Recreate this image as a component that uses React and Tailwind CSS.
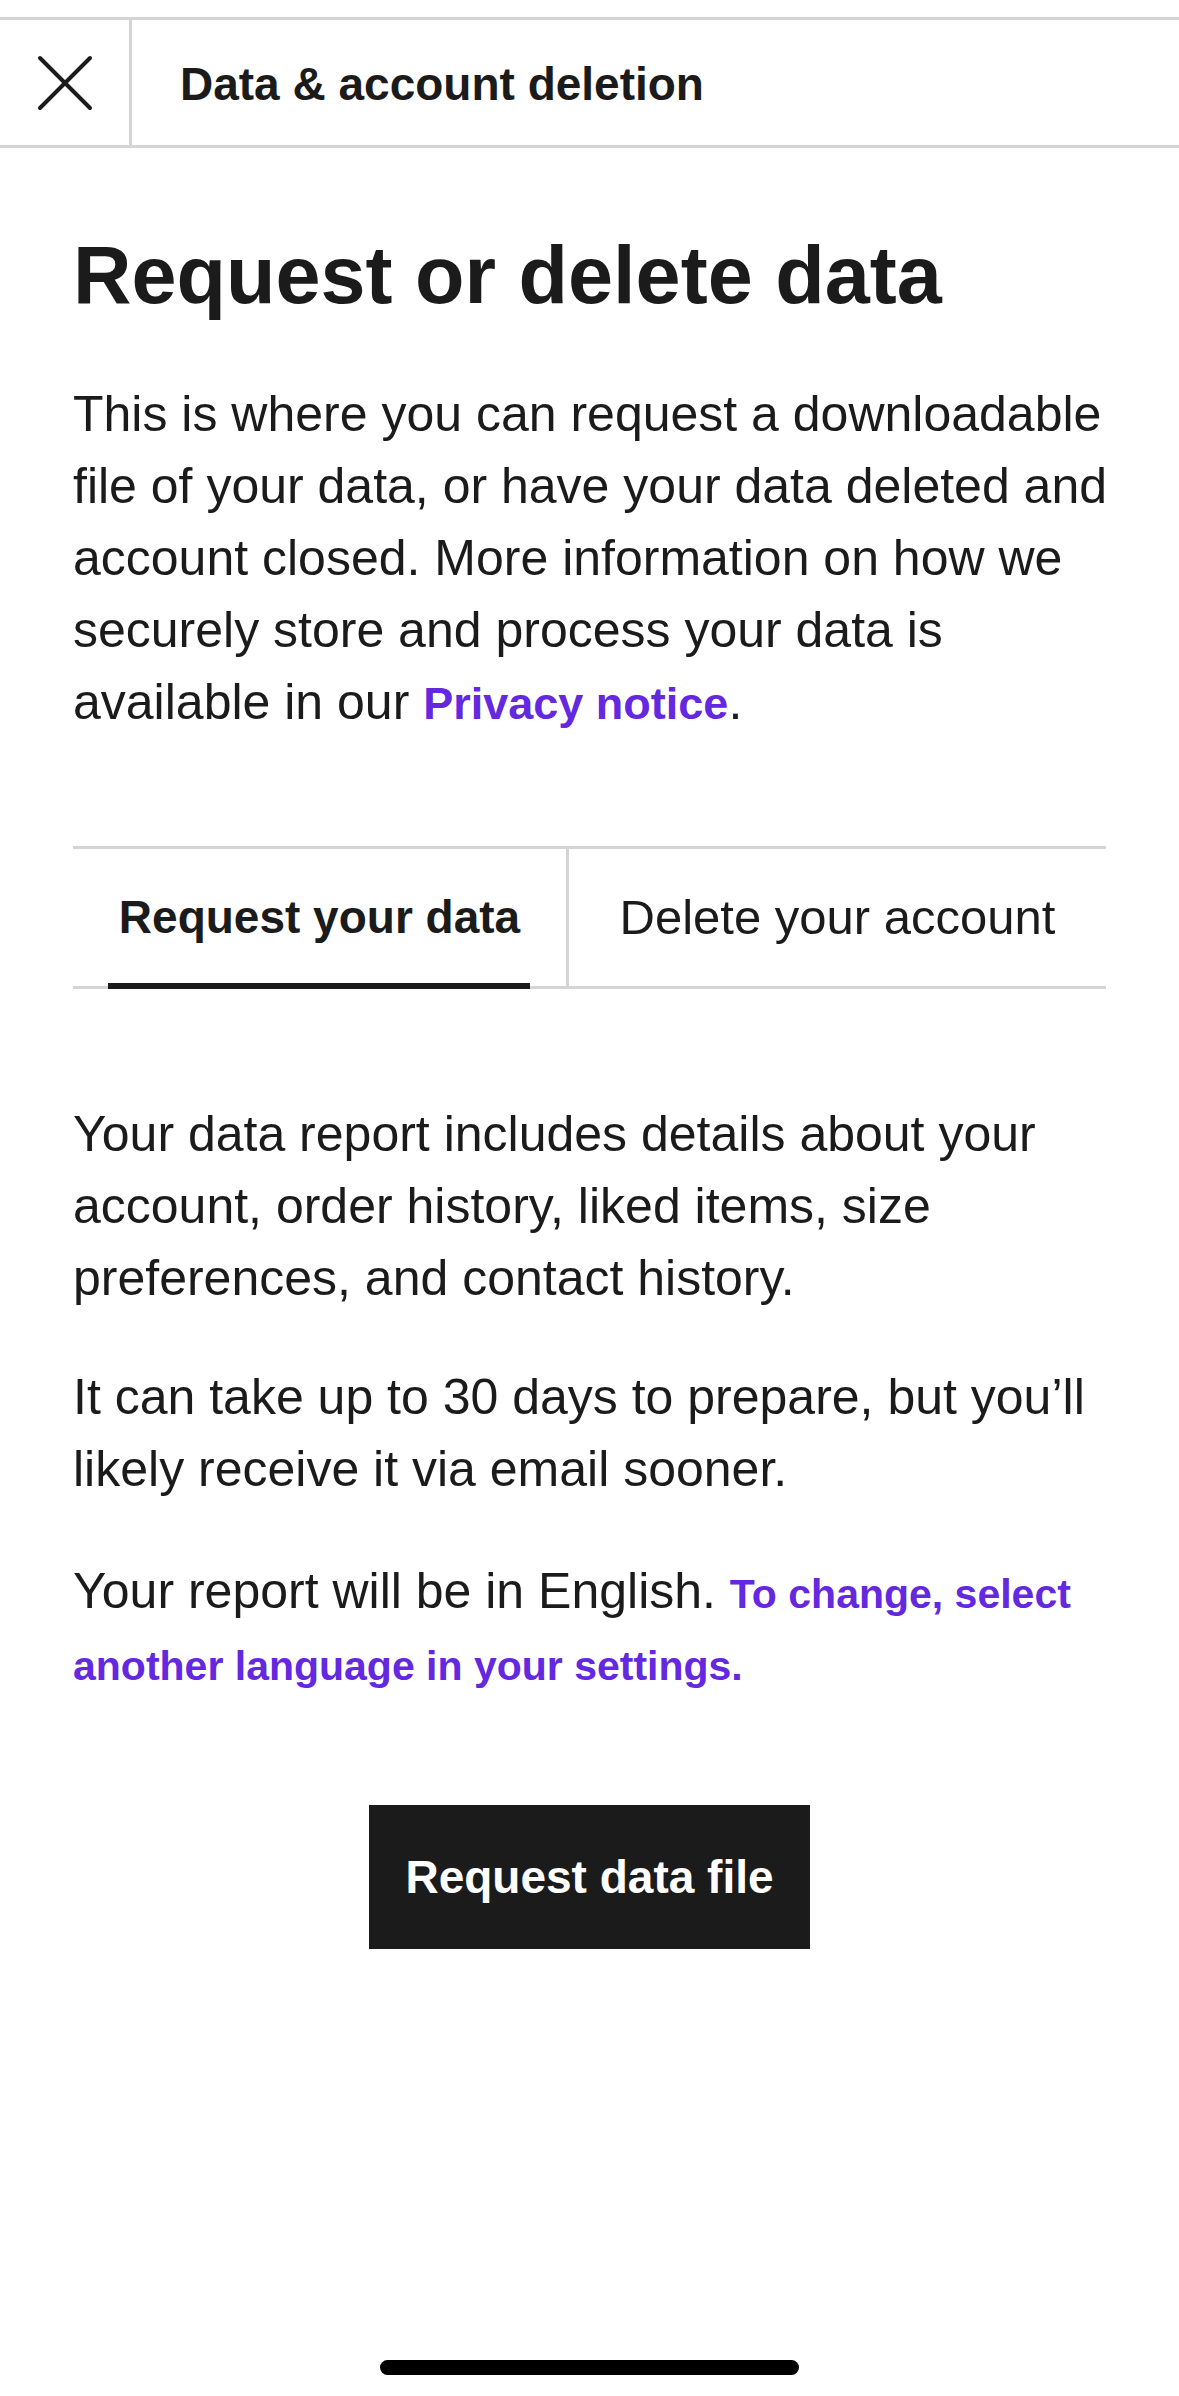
import React, { useState } from 'react';

const tabs = ['Request your data', 'Delete your account'];

export default function App() {
  const [active, setActive] = useState(0);

  return (
    <div className="min-h-[2396px] bg-white flex flex-col font-['Liberation_Sans',Arial,sans-serif] text-[#1b1b1b]">
      <div className="h-[17px] shrink-0" />

      {/* Header */}
      <header className="flex h-[131px] shrink-0 border-y-[3px] border-[#d5d5d5]">
        <button className="w-[132px] shrink-0 border-r-[3px] border-[#d5d5d5] flex items-center justify-center">
          <svg width="56" height="56" viewBox="0 0 56 56" fill="none">
            <path d="M3 3L53 53M53 3L3 53" stroke="#1b1b1b" strokeWidth="4" strokeLinecap="round" />
          </svg>
        </button>
        <h1 className="pl-[48px] pt-[2px] flex items-center text-[46px] font-bold leading-none">
          Data &amp; account deletion
        </h1>
      </header>

      <main className="pl-[73px] pr-[64px]">
        <h2 className="mt-[79px] text-[81px] leading-[96px] font-bold">Request or delete data</h2>

        <p className="mt-[55px] text-[50px] leading-[72px]">
          This is where you can request a downloadable file of your data, or have your data deleted and
          account closed. More information on how we securely store and process your data is available in
          our <a className="text-[45px] leading-none font-bold text-[#6328e0]">Privacy notice</a>.
        </p>

        {/* Tabs */}
        <div className="mt-[108px] mr-[9px] flex h-[143px] border-y-[3px] border-[#d5d5d5]">
          {tabs.map((t, i) => (
            <button
              key={t}
              onClick={() => setActive(i)}
              className={
                i === 0
                  ? 'relative w-[496px] shrink-0 border-r-[3px] border-[#d5d5d5] flex items-center justify-center'
                  : 'relative flex-1 flex items-center justify-center'
              }
            >
              <span className={active === i ? 'text-[46px] font-bold' : 'text-[49px]'}>{t}</span>
              {active === i && (
                <span className="absolute left-[35px] right-[36px] bottom-[-3px] h-[6px] bg-[#1b1b1b]" />
              )}
            </button>
          ))}
        </div>

        <p className="mt-[109px] text-[50px] leading-[72px]">
          Your data report includes details about your account, order history, liked items, size
          preferences, and contact history.
        </p>
        <p className="mt-[47px] text-[50px] leading-[72px]">
          It can take up to 30 days to prepare, but you’ll likely receive it via email sooner.
        </p>
        <p className="mt-[50px] text-[50px] leading-[72px]">
          Your report will be in English.{' '}
          <a className="text-[41px] leading-none font-bold text-[#6328e0]">
            To change, select another language in your settings.
          </a>
        </p>

        <div className="mt-[106px] mr-[9px] flex justify-center">
          <button className="w-[441px] h-[144px] bg-[#1b1b1b] text-white text-[46px] font-bold">
            Request data file
          </button>
        </div>
      </main>

      <div className="flex-1" />
      <div className="mx-auto mb-[21px] w-[419px] h-[15px] rounded-full bg-black" />
    </div>
  );
}
